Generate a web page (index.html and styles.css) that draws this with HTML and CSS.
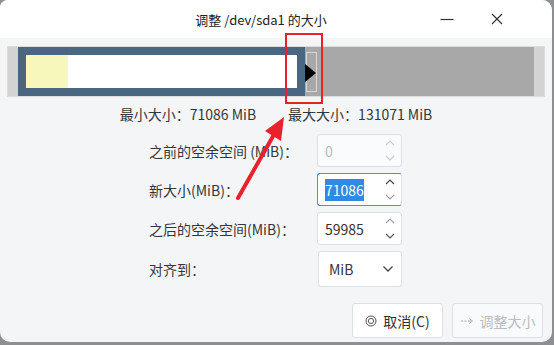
FILE: index.html
```html
<!doctype html>
<html lang="zh-CN">
<head>
<meta charset="utf-8">
<title>调整 /dev/sda1 的大小</title>
<link rel="stylesheet" href="styles.css">
</head>
<body>
<div class="dialog">
  <header class="titlebar">
    <span class="title">调整 /dev/sda1 的大小</span>
    <span class="wbtn">
      <svg width="16" height="16" viewBox="0 0 16 16"><path d="M1.5 8.5h13" stroke="#333" stroke-width="1.2"/></svg>
    </span>
    <span class="wbtn">
      <svg width="16" height="16" viewBox="0 0 16 16"><path d="M3 3l10 10M13 3L3 13" stroke="#333" stroke-width="1.2"/></svg>
    </span>
  </header>

  <main class="body">
    <div class="pbar">
      <div class="seg-pad"></div>
      <div class="seg-part"><div class="inner"><div class="used"></div></div></div>
      <div class="seg-free"></div>
      <div class="seg-pad end"></div>
      <div class="handle"></div>
    </div>

    <div class="limits">
      <span>最小大小：71086 MiB</span>
      <span>最大大小：131071 MiB</span>
    </div>

    <div class="form">
      <label>之前的空余空间 (MiB)：</label>
      <div class="spin disabled"><span class="val">0</span>
        <span class="arrows">
          <svg width="10" height="6" viewBox="0 0 10 6"><path d="M1 5l4-4 4 4" fill="none" stroke="currentColor" stroke-width="1.1"/></svg>
          <svg width="10" height="6" viewBox="0 0 10 6"><path d="M1 1l4 4 4-4" fill="none" stroke="currentColor" stroke-width="1.1"/></svg>
        </span>
      </div>

      <label>新大小(MiB)：</label>
      <div class="spin focus"><span class="val"><span class="sel">71086</span></span>
        <span class="arrows">
          <svg width="10" height="6" viewBox="0 0 10 6"><path d="M1 5l4-4 4 4" fill="none" stroke="#444" stroke-width="1.2"/></svg>
          <svg width="10" height="6" viewBox="0 0 10 6"><path d="M1 1l4 4 4-4" fill="none" stroke="currentColor" stroke-width="1.1"/></svg>
        </span>
      </div>

      <label>之后的空余空间(MiB)：</label>
      <div class="spin"><span class="val">59985</span>
        <span class="arrows">
          <svg width="10" height="6" viewBox="0 0 10 6"><path d="M1 5l4-4 4 4" fill="none" stroke="currentColor" stroke-width="1.1"/></svg>
          <svg width="10" height="6" viewBox="0 0 10 6"><path d="M1 1l4 4 4-4" fill="none" stroke="#555" stroke-width="1.2"/></svg>
        </span>
      </div>

      <label>对齐到：</label>
      <div class="combo"><span>MiB</span>
        <svg width="12" height="8" viewBox="0 0 12 8"><path d="M1.5 1.5l4.5 4.5 4.5-4.5" fill="none" stroke="#444" stroke-width="1.3"/></svg>
      </div>
    </div>

    <div class="buttons">
      <button class="btn">
        <svg width="12" height="12" viewBox="0 0 12 12"><circle cx="6" cy="6" r="5" fill="none" stroke="#555" stroke-width="1"/><circle cx="6" cy="6" r="2.6" fill="none" stroke="#555" stroke-width="1"/></svg>
        取消(C)
      </button>
      <button class="btn off" disabled>
        <svg width="14" height="10" viewBox="0 0 14 10"><path d="M1 5h2M4.5 5h2M8 5h3" stroke="#aaa" stroke-width="1"/><path d="M9.5 2.5L12.5 5 9.5 7.5" fill="none" stroke="#aaa" stroke-width="1"/></svg>
        调整大小
      </button>
    </div>
  </main>

  <svg class="marks" width="554" height="345" viewBox="0 0 554 345">
    <rect x="286" y="34" width="36" height="69" fill="none" stroke="#e8212b" stroke-width="2"/>
    <path d="M238 198L276 131" stroke="#e8212b" stroke-width="4" stroke-linecap="round"/>
    <path d="M284 117L265 131L281 141Z" fill="#e8212b"/>
  </svg>
</div>
</body>
</html>
```

FILE: styles.css
```css
*{box-sizing:border-box;margin:0;padding:0;}
body{
  width:554px;height:345px;overflow:hidden;
  background:#8d8f93;
  font-family:"Noto Sans CJK SC","Noto Sans",sans-serif;
  font-size:14px;color:#343538;
}
.dialog{
  position:relative;
  width:552px;height:342px;
  background:#f4f5f7;
  border-radius:8px 10px 10px 10px;
  overflow:hidden;
  display:flex;flex-direction:column;
}
.titlebar{
  height:38px;background:#fff;
  display:flex;align-items:center;
  padding:0 30px 0 0;
}
.title{flex:1;text-align:center;font-size:13px;padding-left:100px;color:#222;}
.wbtn{width:50px;display:flex;justify-content:center;}
.body{flex:1;padding:8px 7px 0 7px;display:flex;flex-direction:column;}

/* partition bar */
.pbar{
  position:relative;
  width:538px;height:51px;
  border:1px solid #dcdcdc;
  display:flex;
}
.seg-pad{width:10px;background:#d3d3d3;}
.seg-pad.end{width:10px;}
.seg-part{width:287px;background:#4a6781;padding:8px;}
.inner{height:100%;background:#fff;}
.used{width:42px;height:100%;background:#f7f7bb;}
.seg-free{flex:1;background:#a8a8a8;}
.handle{
  position:absolute;left:298px;top:5px;
  width:11px;height:40px;
  border:1px solid #d8d8d8;
}
.handle::before{
  content:"";position:absolute;left:-2px;top:11px;
  border-left:11px solid #000;
  border-top:9px solid transparent;border-bottom:9px solid transparent;
}

.limits{
  display:flex;justify-content:center;gap:32px;
  margin-top:7px;height:20px;line-height:20px;
}

/* form */
.form{
  display:grid;
  grid-template-columns:168px 85px;
  row-gap:6px;
  margin:10px 0 0 142px;
  align-items:center;
}
.form label{line-height:20px;}
.spin{
  height:33px;background:#fff;
  border:1px solid #dcdfe6;border-radius:3px;
  display:flex;align-items:center;
}
.spin .val{flex:1;padding-left:7px;}
.spin.disabled .val{color:#b6b8bc;}
.spin.disabled{background:#fafbfc;}
.spin.focus{border-color:#4e8fdc;border-right-color:#dcdfe6;}
.sel{background:#3189e3;color:#fff;padding:1px 0;}
.arrows{
  width:22px;height:100%;padding:5px 0;
  display:flex;flex-direction:column;align-items:center;justify-content:space-between;
  color:#9a9da3;
}
.spin.disabled .arrows{color:#c8cacd;}
.combo{
  height:36px;margin-left:1px;background:#fff;
  border:1px solid #dcdfe6;border-radius:3px;
  display:flex;align-items:center;justify-content:space-between;
  padding:0 7px 0 10px;
}

/* buttons */
.buttons{
  display:flex;justify-content:flex-end;gap:9px;
  margin-top:auto;margin-bottom:4px;padding-right:2px;
}
.btn{
  width:91px;height:35px;
  background:#fff;border:1px solid #dcdfe6;border-radius:3px;
  font:inherit;color:#303133;
  display:flex;align-items:center;justify-content:center;gap:6px;
}
.btn.off{color:#b9bcc2;background:#f9fafb;}

.marks{position:absolute;left:0;top:0;pointer-events:none;}
```
